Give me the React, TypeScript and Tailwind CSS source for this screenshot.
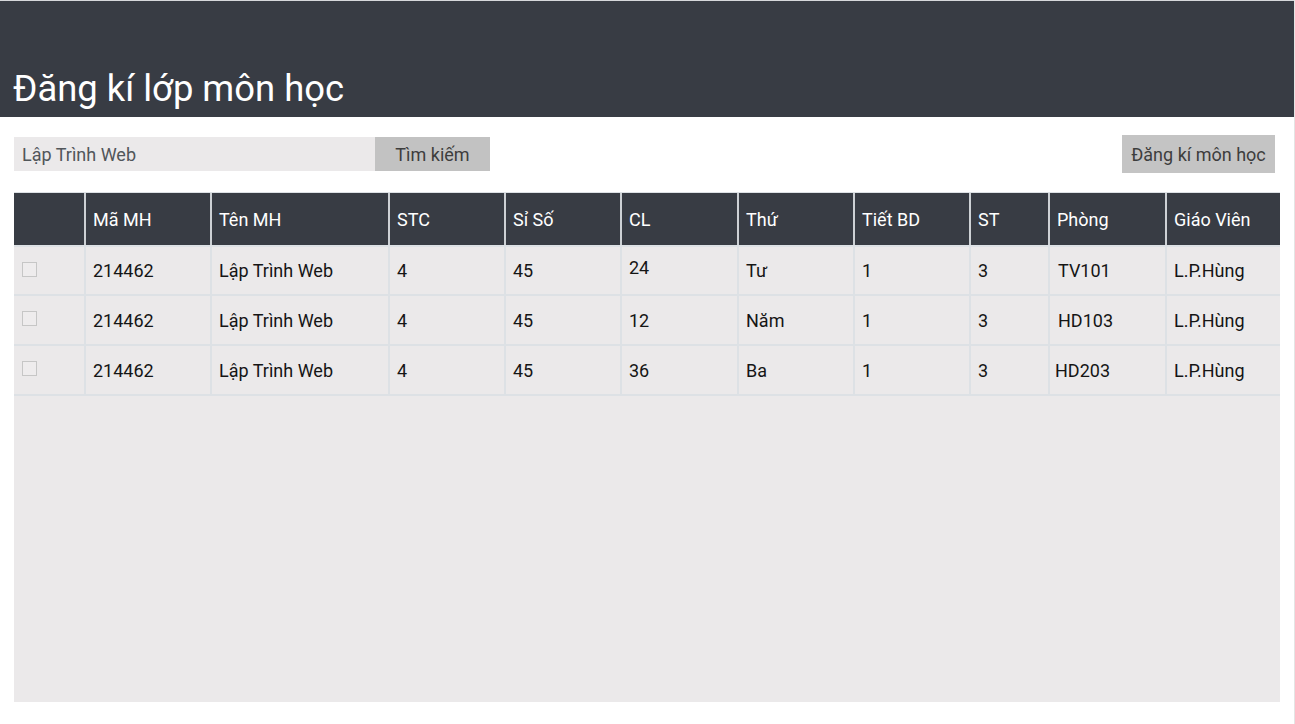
import React from "react";

const gridCols = "grid grid-cols-[72px_126px_178px_116px_116px_117px_116px_116px_79px_117px_113px]";

const headers = ["", "Mã MH", "Tên MH", "STC", "Sỉ Số", "CL", "Thứ", "Tiết BD", "ST", "Phòng", "Giáo Viên"];

const rows = [
  ["214462", "Lập Trình Web", "4", "45", "24", "Tư", "1", "3", "TV101", "L.P.Hùng"],
  ["214462", "Lập Trình Web", "4", "45", "12", "Năm", "1", "3", "HD103", "L.P.Hùng"],
  ["214462", "Lập Trình Web", "4", "45", "36", "Ba", "1", "3", "HD203", "L.P.Hùng"],
];

const rowHeights = ["h-[49px]", "h-[50px]", "h-[50px]"];

export default function App() {
  return (
    <div
      className="w-[1295px] h-[724px] bg-white border-r border-[#e4e4e4] flex flex-col overflow-hidden"
      style={{ fontFamily: "Roboto, 'Noto Sans', sans-serif" }}
    >
      <div className="h-[117px] bg-[#383c44] border-t border-[#d6d8db] flex items-end px-[13px] pb-[7px]">
        <h1 className="text-[36.4px] leading-[43px] text-white font-normal">Đăng kí lớp môn học</h1>
      </div>

      <div className="flex items-center justify-between pl-[14px] pr-[19px] mt-[18px] h-[38px]">
        <div className="flex h-[34px]">
          <div className="w-[361px] bg-[#ebe9ea] flex items-center pl-[8px] text-[18px] text-[#51565a]">
            Lập Trình Web
          </div>
          <div className="w-[115px] bg-[#c2c2c2] flex items-center justify-center text-[18px] text-[#3d3d3d]">
            Tìm kiếm
          </div>
        </div>
        <div className="w-[153px] h-[38px] bg-[#c4c4c4] flex items-center justify-center text-[18px] text-[#3d3d3d]">
          Đăng kí môn học
        </div>
      </div>

      <div className="ml-[14px] mt-[19px] w-[1266px] h-[510px] bg-[#ebe9ea] border-t border-[#dde1e5]">
        <div className={`${gridCols} h-[54px] bg-[#383c44] border-b-2 border-[#dde1e5]`}>
          {headers.map((h, i) => (
            <div
              key={i}
              className={`flex items-center pl-[7px] text-[18px] text-white ${
                i < headers.length - 1 ? "border-r-2 border-[#cdd1d5]" : ""
              }`}
            >
              {h}
            </div>
          ))}
        </div>
        {rows.map((r, ri) => (
          <div key={ri} className={`${gridCols} ${rowHeights[ri]} border-b-2 border-[#dde1e5]`}>
            <div className="flex items-center pl-[8px] border-r-2 border-[#dde1e5]">
              <div className="w-[15px] h-[15px] border border-[#c6c6c6] bg-[#eeeced] -mt-[3px]" />
            </div>
            {r.map((c, ci) => {
              let extra = "pl-[7px]";
              if (ci === 8) extra = ri === 2 ? "pl-[5px]" : "pl-[8px]";
              const shift = ci === 4 && ri === 0 ? "pb-[6px]" : "";
              return (
                <div
                  key={ci}
                  className={`flex items-center ${extra} ${shift} text-[18px] text-[#151515] ${
                    ci < r.length - 1 ? "border-r-2 border-[#dde1e5]" : ""
                  }`}
                >
                  {c}
                </div>
              );
            })}
          </div>
        ))}
      </div>
    </div>
  );
}
